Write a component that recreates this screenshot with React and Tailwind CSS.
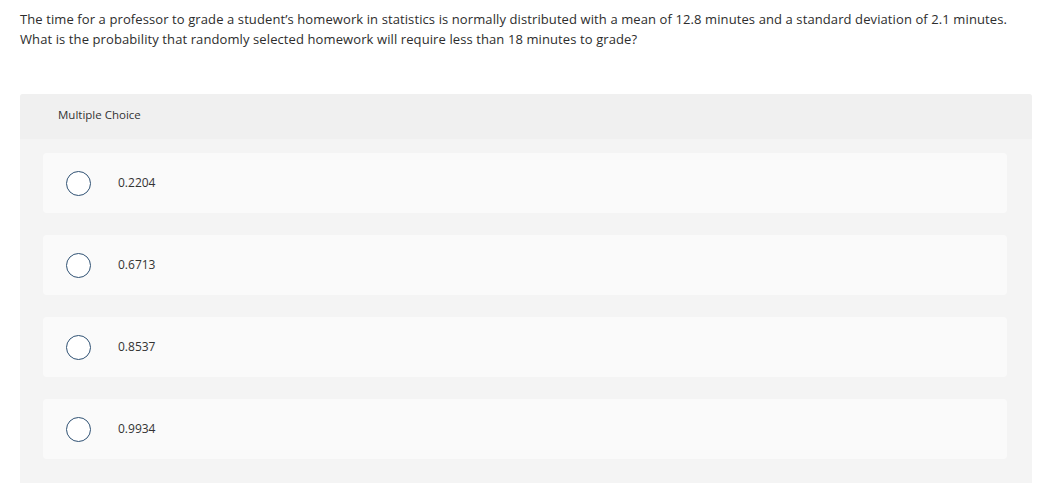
export default function App() {
  const options = ["0.2204", "0.6713", "0.8537", "0.9934"];
  return (
    <div className="w-[1050px] h-[483px] overflow-hidden bg-white text-[#2d2d2d]" style={{ fontFamily: "'Open Sans', Lato, sans-serif" }}>
      <div className="px-5 pt-[9px] text-[13px] leading-[20px] tracking-[0.1px]">
        <p>The time for a professor to grade a student’s homework in statistics is normally distributed with a mean of 12.8 minutes and a standard deviation of 2.1 minutes.</p>
        <p>What is the probability that randomly selected homework will require less than 18 minutes to grade?</p>
      </div>
      <div className="ml-5 mt-[45px] w-[1012px] rounded-t-[3px] bg-[#f4f4f4] pb-8">
        <div className="h-[45px] bg-[#f0f0f0] rounded-t-[3px] flex items-center pl-[38px] pb-[3px] text-[11.5px] text-[#333]">
          Multiple Choice
        </div>
        <div className="flex flex-col gap-[22px] pt-[14px] pl-[23px] pr-[25px]">
          {options.map((o) => (
            <div key={o} className="h-[60px] bg-[#fafafa] rounded-[4px] flex items-center">
              <div className="ml-[23px] w-[25px] h-[25px] rounded-full border-[1.5px] border-[#2f5173] bg-white" />
              <span className="ml-[27px] pb-[1px] text-[12px] text-[#333]">{o}</span>
            </div>
          ))}
        </div>
      </div>
    </div>
  );
}
